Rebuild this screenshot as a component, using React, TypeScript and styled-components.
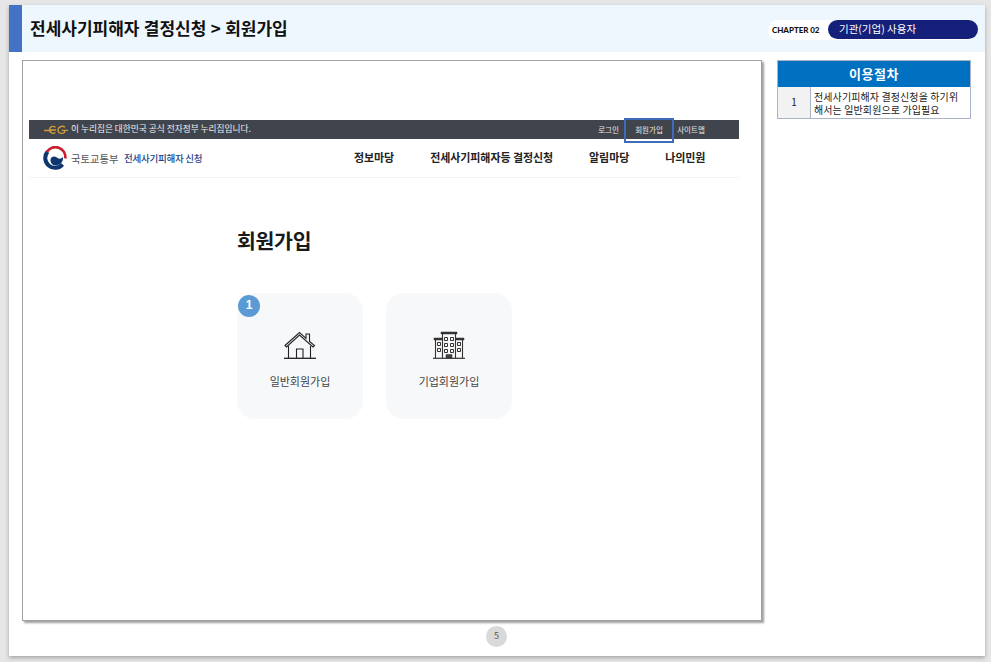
import React from "react";
import styled, { createGlobalStyle } from "styled-components";

const Global = createGlobalStyle`
  html, body { margin: 0; padding: 0; }
  body {
    width: 991px; height: 662px; overflow: hidden; background: #e6e6e6;
    font-family: "Noto Sans CJK KR", "Noto Sans", sans-serif;
  }
  * { box-sizing: border-box; }
`;
const Sheet = styled.div`
  width: 976px; height: 651px; margin: 5px 0 0 9px; background: #fff;
  box-shadow: 0 2px 4px rgba(0,0,0,.28);
  display: flex; flex-direction: column;
`;
const Header = styled.header`
  height: 47px; background: #eef7fd; border-left: 13px solid #4472c4;
  display: flex; align-items: center; padding: 0 7px 0 8px;
`;
const PageTitle = styled.h1`
  margin: 0; flex: 1; font-size: 17px; font-weight: 700; color: #111; word-spacing: .5px;
  position: relative; top: -1px;
`;
const ChapterGroup = styled.div`
  display: flex; align-items: center; height: 20px; background: #fff; border-radius: 10px;
  padding-left: 4px; position: relative; top: 1px;
`;
const Chapter = styled.span`
  font-family: "Lato", sans-serif; font-size: 8px; font-weight: 900; color: #111; width: 56px; letter-spacing: -.05px;
`;
const Role = styled.span`
  width: 150px; height: 19px; border-radius: 10px; background: #14207a; color: #fff;
  font-size: 10.500px; line-height: 18px; padding-left: 11px;
`;
const Body = styled.div`
  flex: 1; display: flex; align-items: flex-start; padding: 8px 13px 0 13px;
`;
const Column = styled.div`
  display: flex; flex-direction: column; align-items: flex-start;
`;
const Frame = styled.main`
  width: 740px; height: 561px; background: #fff; border: 1px solid #a3a3a3;
  box-shadow: 2px 2px 2px rgba(0,0,0,.38); padding: 59px 22px 0 6px;
`;
const TopBar = styled.div`
  height: 19px; background: #40444d; display: flex; align-items: center; padding-left: 15px; color: #f0f0f0;
`;
const Notice = styled.span`
  flex: 1; margin: 0 0 2px 3px; font-size: 8.700px;
`;
const TopLink = styled.span<{ $w: number }>`
  position: relative; width: ${p => p.$w}px; text-align: center; font-size: 7.500px; color: #e8e8e8;
`;
const Highlight = styled.span`
  position: absolute; left: 0; top: -6px; width: 50px; height: 25px; border: 2px solid #3f6cb8;
`;
const Nav = styled.nav`
  height: 39px; display: flex; align-items: center; border-bottom: 1px solid #f4f4f4; padding-left: 14px;
`;
const Ministry = styled.span`
  margin-left: 4px; font-size: 10.300px; color: #555; width: 53px; white-space: nowrap;
`;
const Service = styled.span`
  font-size: 9.500px; font-weight: 500; color: #1f4287; width: 230px; letter-spacing: -.25px; white-space: nowrap;
`;
const Menu = styled.div`
  display: flex; gap: 36px; padding-bottom: 2px; font-size: 11px; font-weight: 700; color: #222; white-space: nowrap; letter-spacing: -.08px;
`;
const Content = styled.section`
  padding: 48px 0 0 208px;
`;
const Heading = styled.h2`
  margin: 0 0 38px; font-size: 20.500px; font-weight: 700; line-height: 29px; color: #1a1a1a; letter-spacing: -.3px;
`;
const Cards = styled.div`
  display: flex; gap: 23px;
`;
const Card = styled.div`
  position: relative; width: 126px; height: 126px; border-radius: 18px; background: #f7f8fa;
  display: flex; flex-direction: column; align-items: center; padding-top: 38px;
`;
const CardLabel = styled.span`
  margin-top: 14px; font-size: 11px; line-height: 16px; color: #444;
`;
const Badge = styled.span`
  position: absolute; left: 1px; top: 2px; width: 22px; height: 22px; border-radius: 50%;
  background: #5b9bd5; color: #fff; font-size: 12px; font-weight: 700; line-height: 21px; text-align: center;
  font-family: "Liberation Sans", sans-serif;
`;
const PageNumber = styled.span`
  margin: 5px 0 0 464px; width: 21px; height: 21px; border-radius: 50%; background: #d9d9d9; color: #555;
  font-size: 9px; line-height: 20px; text-align: center;
`;
const Side = styled.aside`
  width: 194px; margin-left: 15px; border: 1px solid #a9b4c8;
`;
const SideTitle = styled.div`
  height: 26px; background: #0070c0; color: #fff; font-size: 13px; font-weight: 700; line-height: 25px; text-align: center; letter-spacing: .5px;
`;
const SideRow = styled.div`
  display: flex; height: 31px;
`;
const StepNumber = styled.div`
  width: 33px; background: #f2f2f2; border-right: 1px solid #a9b4c8; font-size: 10px; line-height: 30px; text-align: center; color: #222;
`;
const StepText = styled.div`
  flex: 1; padding: 3px 0 0 3px; font-size: 10px; line-height: 13px; color: #222; letter-spacing: .1px; white-space: nowrap;
`;

const EgLogo = () => (
  <svg width="24" height="10" viewBox="0 0 24 10" fill="none" stroke="#cf9a35" strokeWidth="1.400">
    <path d="M0 5.500h8M6 5h6M11.500 2.300C9 .6 6 1.200 5.500 4.400 5.200 7.800 9 9.400 11.500 7.500M21 2.300C19 .6 14.600 1 14 4.600c-.4 3.400 4 5 6.600 2.600V5.400h-3M20 5.400h4" />
  </svg>
);
const Emblem = () => (
  <svg width="24" height="24" viewBox="0 0 24 24" fill="none">
    <circle cx="12" cy="12" r="11.500" fill="#fff" />
    <path d="M4.600 5.600A9.800 9.800 0 0 0 19.500 18.400" stroke="#10366f" strokeWidth="4" />
    <path d="M3.800 6A10 10 0 0 1 22.300 12.500" stroke="#c8202f" strokeWidth="2.600" />
    <path d="M7.500 13.500c.4-3 4-4 6-2.200 1.800 1.700 4.500 2 6.500-.3.600 4.600-3 8.500-7.500 8.500-3 0-5.400-2.800-5-6Z" fill="#10366f" />
  </svg>
);
const HouseIcon = () => (
  <svg width="32" height="28" viewBox="0 0 32 28" fill="none" stroke="#222" strokeWidth="1.100">
    <path d="M1 14.500 15.500 1.500 22 7.300V3h3.500v7.500L30.500 14.500 29 16 15.500 4 2.500 16Z" />
    <path d="M4.500 15v12M26.500 15v12M12.500 27V18h6.500v9" />
    <path d="M0 27.300h32" strokeWidth="1.300" />
  </svg>
);
const BuildingIcon = () => (
  <svg width="32" height="28" viewBox="0 0 32 28" fill="none" stroke="#333">
    <path d="M8 1h16v2H8ZM1 7h8v2H1ZM23 7h8v2h-8Z" fill="#333" strokeWidth=".5" />
    <path d="M2.500 9v18M9.500 3v24M22.500 3v24M29.500 9v18" strokeWidth="1.100" />
    <path d="M4.500 11.500h3v3h-3ZM4.500 17.500h3v3h-3ZM24.500 11.500h3v3h-3ZM24.500 17.500h3v3h-3ZM11.500 6.500h3v3h-3ZM17.500 6.500h3v3h-3ZM11.500 12.500h3v3h-3ZM17.500 12.500h3v3h-3ZM11.500 18.500h3v3h-3ZM17.500 18.500h3v3h-3Z" strokeWidth="1" />
    <path d="M13 23.500h6V27h-6Z" fill="#444" strokeWidth=".5" />
    <path d="M0 27.300h32" strokeWidth="1.200" />
  </svg>
);

export default function App() {
  return (
    <>
      <Global />
      <Sheet>
        <Header>
          <PageTitle>전세사기피해자 결정신청 &gt; 회원가입</PageTitle>
          <ChapterGroup>
            <Chapter>CHAPTER 02</Chapter>
            <Role>기관(기업) 사용자</Role>
          </ChapterGroup>
        </Header>
        <Body>
          <Column>
            <Frame>
              <TopBar>
                <EgLogo />
                <Notice>이 누리집은 대한민국 공식 전자정부 누리집입니다.</Notice>
                <TopLink $w={31}>로그인</TopLink>
                <TopLink $w={50}><Highlight />회원가입</TopLink>
                <TopLink $w={34}>사이트맵</TopLink>
                <TopLink $w={31} />
              </TopBar>
              <Nav>
                <Emblem />
                <Ministry>국토교통부</Ministry>
                <Service>전세사기피해자 신청</Service>
                <Menu>
                  <span>정보마당</span>
                  <span>전세사기피해자등 결정신청</span>
                  <span>알림마당</span>
                  <span>나의민원</span>
                </Menu>
              </Nav>
              <Content>
                <Heading>회원가입</Heading>
                <Cards>
                  <Card>
                    <Badge>1</Badge>
                    <HouseIcon />
                    <CardLabel>일반회원가입</CardLabel>
                  </Card>
                  <Card>
                    <BuildingIcon />
                    <CardLabel>기업회원가입</CardLabel>
                  </Card>
                </Cards>
              </Content>
            </Frame>
            <PageNumber>5</PageNumber>
          </Column>
          <Side>
            <SideTitle>이용절차</SideTitle>
            <SideRow>
              <StepNumber>1</StepNumber>
              <StepText>전세사기피해자 결정신청을 하기위<br />해서는 일반회원으로 가입필요</StepText>
            </SideRow>
          </Side>
        </Body>
      </Sheet>
    </>
  );
}
